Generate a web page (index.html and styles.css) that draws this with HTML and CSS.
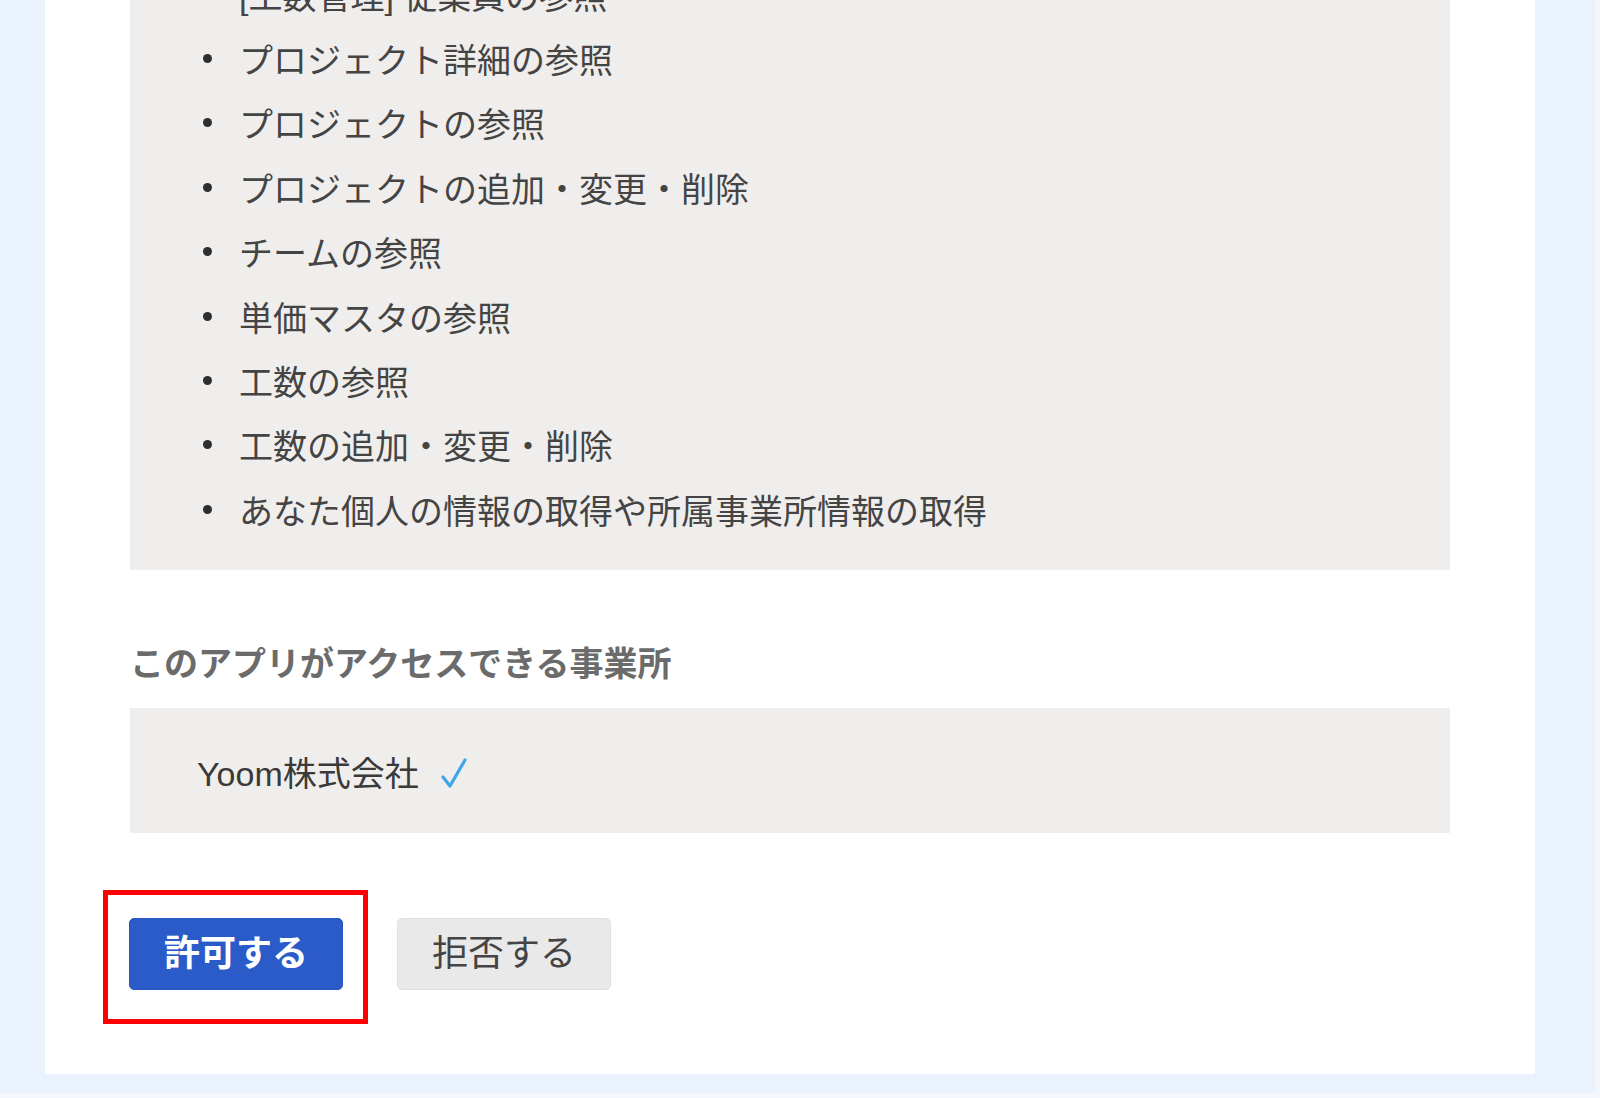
FILE: index.html
```html
<!DOCTYPE html>
<html lang="ja">
<head>
<meta charset="utf-8">
<title>アクセス許可</title>
<link rel="stylesheet" href="styles.css">
</head>
<body>
<div class="frame">
  <main class="card">
    <section class="scope-box">
      <ul class="scope-list">
        <li>[工数管理] 従業員の参照</li>
        <li>プロジェクト詳細の参照</li>
        <li>プロジェクトの参照</li>
        <li>プロジェクトの追加・変更・削除</li>
        <li>チームの参照</li>
        <li>単価マスタの参照</li>
        <li>工数の参照</li>
        <li>工数の追加・変更・削除</li>
        <li>あなた個人の情報の取得や所属事業所情報の取得</li>
      </ul>
    </section>
    <h2 class="section-title">このアプリがアクセスできる事業所</h2>
    <section class="office-box">
      <span class="office-name">Yoom株式会社</span>
      <svg class="check" width="28" height="32" viewBox="0 0 28 32" aria-hidden="true">
        <path d="M3 20 L10 29 L25 3" fill="none" stroke="#3da5e8" stroke-width="3.2" stroke-linecap="round" stroke-linejoin="round"/>
      </svg>
    </section>
    <div class="actions">
      <div class="allow-wrap">
        <button class="btn btn-allow" type="button">許可する</button>
        <span class="highlight" aria-hidden="true"></span>
      </div>
      <button class="btn btn-deny" type="button">拒否する</button>
    </div>
  </main>
</div>
</body>
</html>
```

FILE: styles.css
```css
html, body {
  margin: 0;
  padding: 0;
  background: #f3f7fd;
}

body {
  width: 1600px;
  height: 1098px;
  overflow: hidden;
  font-family: "Liberation Sans", "Noto Sans CJK JP", sans-serif;
  color: #444444;
}

.frame {
  width: 1595px;
  height: 1093px;
  overflow: hidden;
  background: #eaf2fd;
}

.card {
  width: 1490px;
  margin: -56px 0 0 45px;
  box-sizing: border-box;
  padding: 0 85px 84px 85px;
  background: #ffffff;
}

.scope-box {
  background: #f0eeec;
  padding: 18px 0 28px 73px;
}

.scope-list {
  list-style: none;
  margin: 0;
  padding: 0;
}

.scope-list li {
  display: flex;
  align-items: center;
  height: 64.4px;
  font-size: 34px;
  color: #444444;
  white-space: nowrap;
}

.scope-list li::before {
  content: "";
  flex: none;
  width: 9px;
  height: 9px;
  border-radius: 50%;
  background: #2e2e2e;
  margin-right: 27px;
}

.section-title {
  margin: 70px 0 20px 0;
  height: 48px;
  line-height: 48px;
  font-size: 34px;
  font-weight: bold;
  color: #6b6b6b;
}

.office-box {
  height: 125px;
  box-sizing: border-box;
  padding: 3px 0 0 67px;
  display: flex;
  align-items: center;
  background: #f0eeec;
}

.office-name {
  font-size: 34px;
  color: #3a3a3a;
}

.check {
  margin-left: 21px;
  margin-top: 2px;
}

.actions {
  margin-top: 85px;
  display: flex;
  align-items: flex-start;
  gap: 54px;
}

.allow-wrap {
  position: relative;
  margin-left: -1px;
}

.btn {
  width: 214px;
  height: 72px;
  box-sizing: border-box;
  border-radius: 5px;
  font-family: "Liberation Sans", "Noto Sans CJK JP", sans-serif;
  font-size: 36px;
  line-height: 1;
  padding: 0;
  cursor: pointer;
}

.btn-allow {
  display: block;
  background: #2a5bc8;
  border: 1px solid #2755c0;
  color: #ffffff;
  font-weight: bold;
}

.btn-deny {
  background: #e9e9e9;
  border: 1px solid #e0e0e0;
  color: #444444;
  font-weight: normal;
}

.highlight {
  position: absolute;
  left: -26px;
  top: -28px;
  right: -25px;
  bottom: -34px;
  border: 5px solid #ff0000;
  pointer-events: none;
}
```
